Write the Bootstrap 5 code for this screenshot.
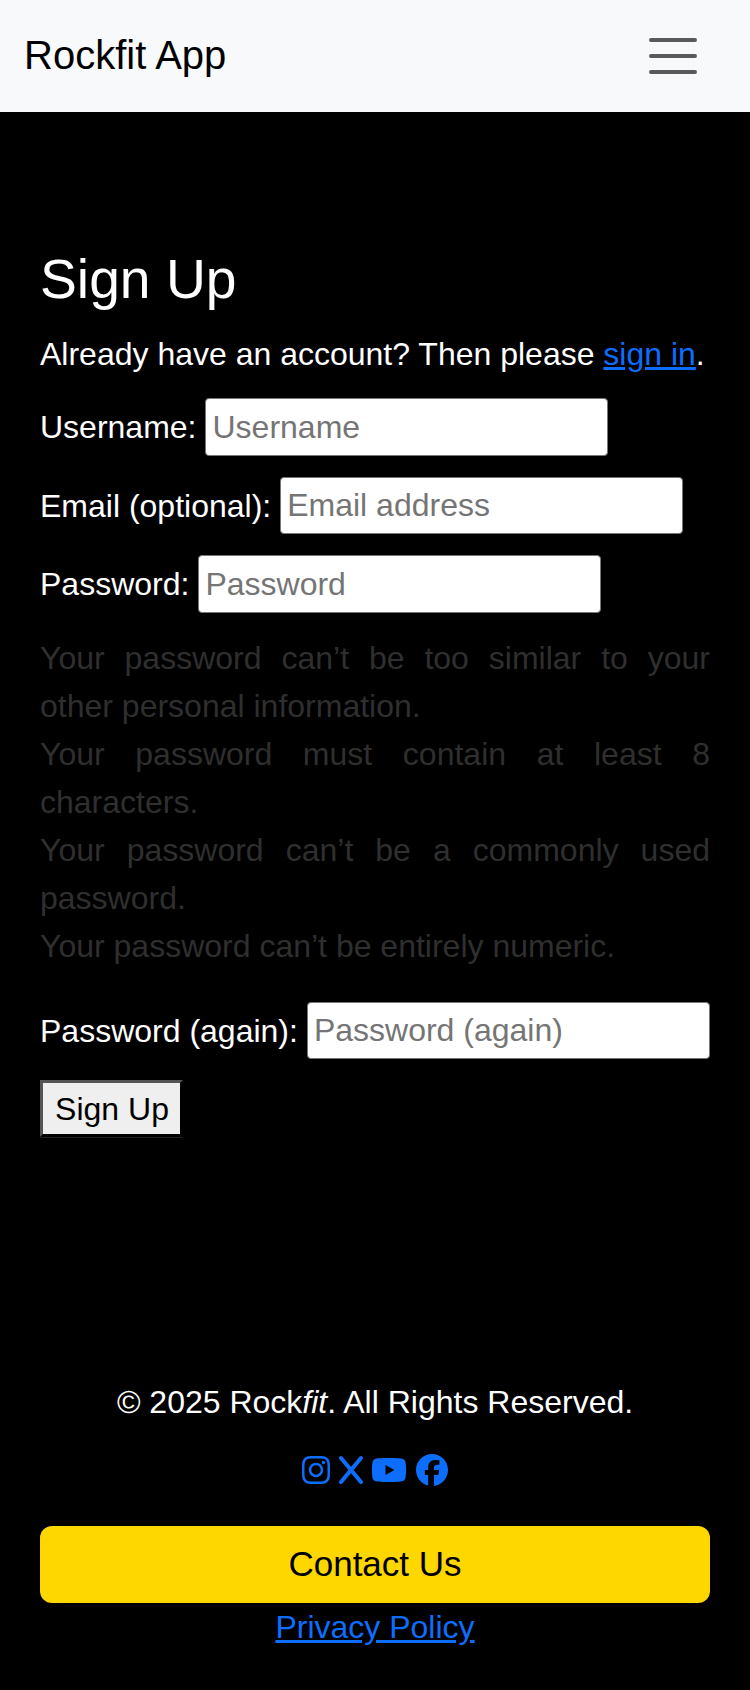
<!DOCTYPE html>
<html lang="en">
<head>
<meta charset="utf-8">
<meta name="viewport" content="width=device-width, initial-scale=1">
<title>Rockfit App</title>
<link href="https://cdn.jsdelivr.net/npm/bootstrap@5.3.0/dist/css/bootstrap.min.css" rel="stylesheet">
<style>
  html { font-size: 32px; }
  body { font-family: "Liberation Sans", Arial, sans-serif; background: #000; color: #fff; min-height: 1690px; }
  a { color: #0d6efd; }
  .navbar { height: 112px; background: #f8f9fa; }
  .navbar-brand { color: #000; padding-top: 0; padding-bottom: 2px; }
  .navbar-toggler { border: 0; margin-right: -1px; }
  .page-main { padding: 133.5px 40px 0; }
  .page-main h1 { margin-bottom: 18px; }
  .page-main p { margin-bottom: 20px; }
  .field { display: flex; align-items: center; gap: 9px; height: 58px; margin-bottom: 20.5px; white-space: nowrap; }
  .field label { padding-top: 1px; }
  .field input { width: 403px; height: 57px; flex: none; padding: 3px 6px 2px; border: 1.5px solid #767676; border-radius: 4px; background: #fff; }
  .field input::placeholder { color: #757575; }
  #u { margin-left: -1px; padding-left: 7px; }
  #u, #p1 { height: 58px; }
  .hints { color: #2f2f2f; text-align: justify; margin-top: 21.5px; margin-bottom: 31px; }
  .submit-btn { display: block; width: 143px; height: 57px; padding: 1px 0 0 1px; background: #efefef; color: #000; border: 3px solid; border-color: #555 #000 #000 #555; box-shadow: 0 1px 0 -0.5px #444; line-height: 1; }
  .page-footer { padding: 0 40px; margin-top: 241px; }
  .page-footer p { margin-bottom: 20px; }
  .socials { gap: 8.9px; height: 48px; margin-bottom: 32px; }
  .socials svg { height: 32px; fill: currentColor; display: block; }
  .contact-btn { height: 77px; background: #ffd700; color: #000; font-size: 35px; border: 0; border-radius: 12px; padding: 0; line-height: 76px; }
</style>
</head>
<body class="d-flex flex-column">
<nav class="navbar navbar-expand-lg navbar-light">
  <div class="container-fluid">
    <a class="navbar-brand" href="#">Rockfit App</a>
    <button class="navbar-toggler" type="button" aria-label="Toggle navigation"><span class="navbar-toggler-icon"></span></button>
  </div>
</nav>
<main class="page-main">
  <h1>Sign Up</h1>
  <p class="text-nowrap">Already have an account? Then please <a href="#">sign in</a>.</p>
  <form>
    <div class="field"><label for="u">Username:</label><input id="u" type="text" placeholder="Username"></div>
    <div class="field"><label for="e">Email (optional):</label><input id="e" type="email" placeholder="Email address"></div>
    <div class="field"><label for="p1">Password:</label><input id="p1" type="password" placeholder="Password"></div>
    <ul class="hints list-unstyled">
      <li>Your password can’t be too similar to your other personal information.</li>
      <li>Your password must contain at least 8 characters.</li>
      <li>Your password can’t be a commonly used password.</li>
      <li>Your password can’t be entirely numeric.</li>
    </ul>
    <div class="field"><label for="p2">Password (again):</label><input id="p2" type="password" placeholder="Password (again)"></div>
    <button class="submit-btn" type="button">Sign Up</button>
  </form>
</main>
<footer class="page-footer text-center">
  <p>© 2025 Rock<em>fit</em>. All Rights Reserved.</p>
  <div class="socials d-flex justify-content-center align-items-center text-primary">
    <svg width="28" viewBox="0 0 448 512"><path d="M224.1 141c-63.6 0-114.9 51.3-114.9 114.9s51.3 114.9 114.9 114.9S339 319.5 339 255.9 287.7 141 224.1 141zm0 189.6c-41.1 0-74.7-33.5-74.7-74.7s33.5-74.7 74.7-74.7 74.7 33.5 74.7 74.7-33.6 74.7-74.7 74.7zm146.4-194.3c0 14.9-12 26.8-26.8 26.8-14.9 0-26.8-12-26.8-26.8s12-26.8 26.8-26.8 26.8 12 26.8 26.8zm76.1 27.2c-1.7-35.9-9.9-67.7-36.2-93.9-26.2-26.2-58-34.4-93.9-36.2-37-2.1-147.9-2.1-184.9 0-35.8 1.7-67.6 9.9-93.9 36.1s-34.4 58-36.2 93.9c-2.1 37-2.1 147.9 0 184.9 1.7 35.9 9.9 67.7 36.2 93.9s58 34.4 93.9 36.2c37 2.1 147.9 2.1 184.9 0 35.9-1.7 67.7-9.9 93.9-36.2 26.2-26.2 34.4-58 36.2-93.9 2.1-37 2.1-147.8 0-184.8zM398.8 388c-7.8 19.6-22.9 34.7-42.6 42.6-29.5 11.7-99.5 9-132.1 9s-102.7 2.6-132.1-9c-19.6-7.8-34.7-22.9-42.6-42.6-11.7-29.5-9-99.5-9-132.1s-2.6-102.7 9-132.1c7.8-19.6 22.9-34.7 42.6-42.6 29.5-11.7 99.5-9 132.1-9s102.7-2.6 132.1 9c19.6 7.8 34.7 22.9 42.6 42.6 11.7 29.5 9 99.5 9 132.1s2.7 102.7-9 132.1z"/></svg>
    <svg width="24" viewBox="0 0 384 512"><path d="M32 64 352 448M352 64 32 448" fill="none" stroke="currentColor" stroke-width="64" stroke-linecap="round"/></svg>
    <svg width="36" viewBox="0 0 576 512"><path d="M549.7 124.1c-6.3-23.7-24.8-42.3-48.3-48.6C458.8 64 288 64 288 64S117.2 64 74.6 75.5c-23.5 6.3-42 24.9-48.3 48.6-11.4 42.9-11.4 132.3-11.4 132.3s0 89.4 11.4 132.3c6.3 23.7 24.8 41.5 48.3 47.8C117.2 448 288 448 288 448s170.8 0 213.4-11.5c23.5-6.3 42-24.2 48.3-47.8 11.4-42.9 11.4-132.3 11.4-132.3s0-89.4-11.4-132.3zm-317.5 213.5V175.2l142.7 81.2-142.7 81.2z"/></svg>
    <svg width="32" viewBox="0 0 512 512"><path d="M512 256C512 114.6 397.4 0 256 0S0 114.6 0 256C0 376 82.7 476.8 194.2 504.5V334.2H141.4V256h52.8V222.3c0-87.1 39.4-127.5 125-127.5c16.2 0 44.2 3.2 55.7 6.4V172c-6-.6-16.5-1-29.6-1c-42 0-58.2 15.9-58.2 57.2V256h83.6l-14.4 78.2H287V510.1C413.8 494.8 512 386.9 512 256z"/></svg>
  </div>
  <button class="contact-btn btn w-100 d-block" type="button">Contact Us</button>
  <a href="#">Privacy Policy</a>
</footer>
<script src="https://cdn.jsdelivr.net/npm/bootstrap@5.3.0/dist/js/bootstrap.bundle.min.js"></script>
</body>
</html>
